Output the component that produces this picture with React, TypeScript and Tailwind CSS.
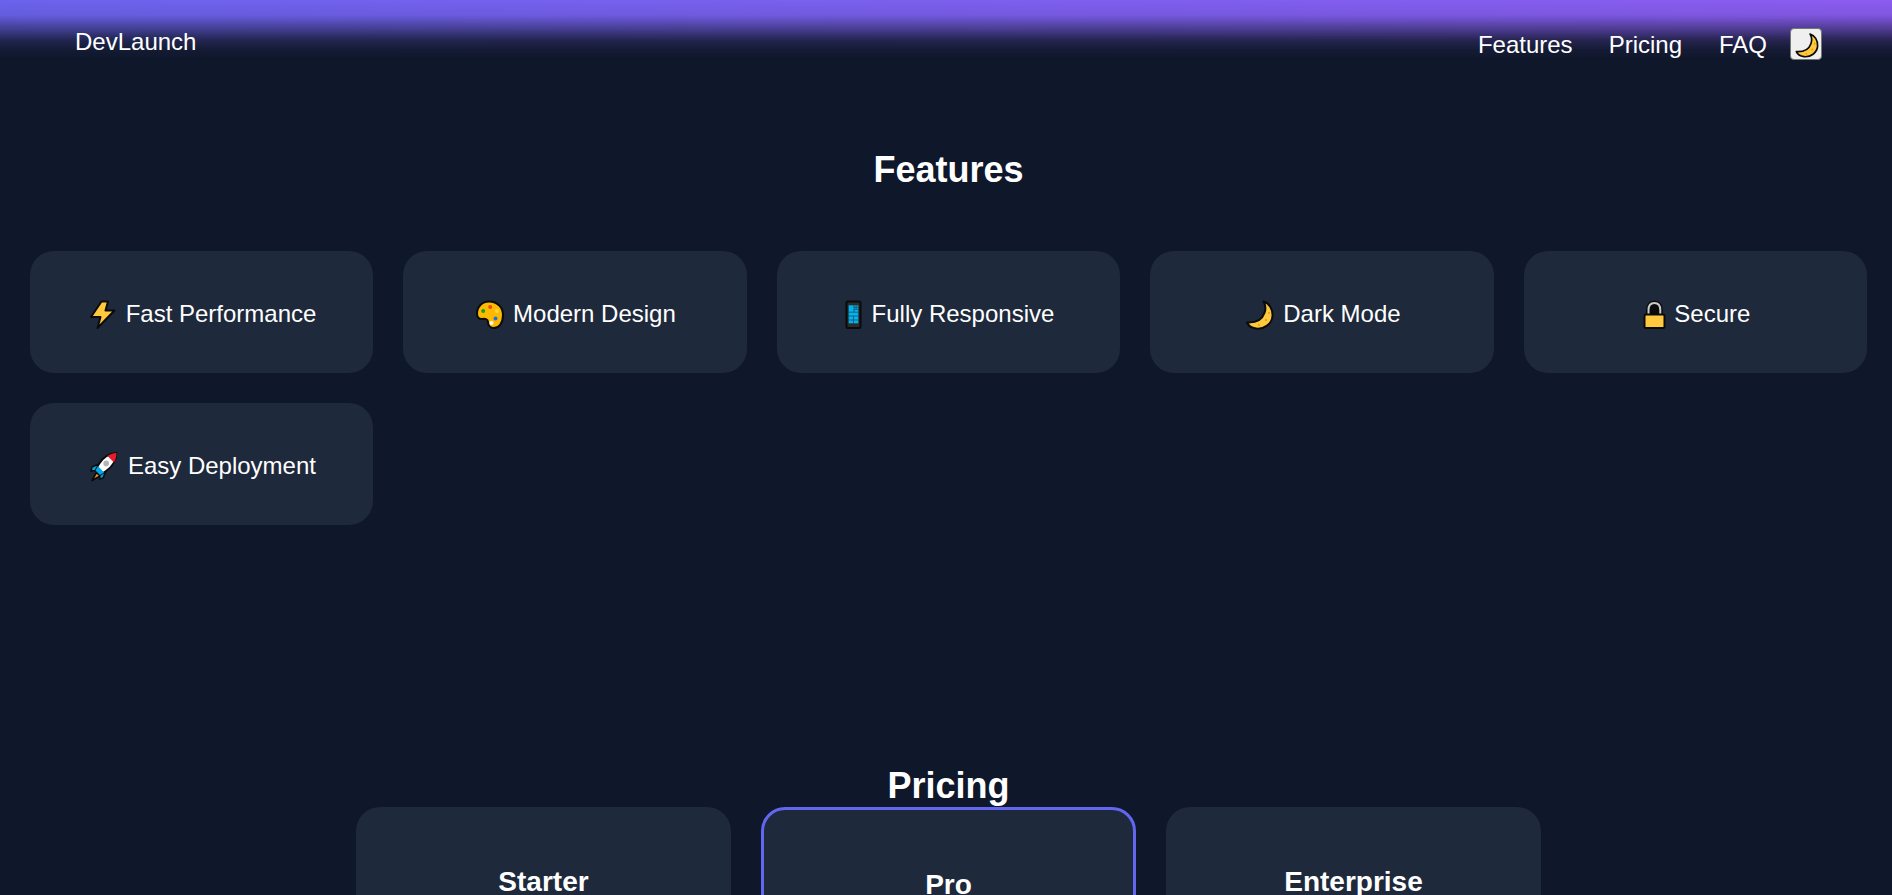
import type { ReactNode } from "react";

// Outlined emoji are drawn by hand: the sandbox only has the rounder Noto set
function Bolt() {
  return (
    <path
      d="M14.5 2.5 L21 2.5 L18.5 11.5 L27.5 11.5 L10.5 29 L13.5 18 L4 18 Z"
      fill="#ffc83d"
      stroke="#0b0b0b"
      strokeWidth="2"
      strokeLinejoin="round"
    />
  );
}

function Palette() {
  return (
    <>
      <path
        d="M15 2.5 C24 2.5 29 9 29 16 C29 24 25 29 20 29 C16 29 14 26 14 23 C14 20 11 19.5 8 20 C5 20.5 3 18 3 14.5 C3 8 8 2.5 15 2.5 Z"
        fill="#ffb900"
        stroke="#0b0b0b"
        strokeWidth="2"
      />
      <circle cx="9.2" cy="12" r="2" fill="#16a31a" />
      <circle cx="16.2" cy="8" r="2" fill="#e8491d" />
      <circle cx="23" cy="12" r="2" fill="#ffd83d" />
      <circle cx="21.5" cy="19.5" r="2" fill="#1d6fe8" />
      <circle cx="17.5" cy="24" r="2" fill="#ffffff" />
    </>
  );
}

function Phone() {
  return (
    <>
      <rect x="3.5" y="2.5" width="14" height="26.5" rx="1.5" fill="#2b2b2b" stroke="#0b0b0b" strokeWidth="2" />
      <rect x="5.7" y="6.3" width="9.6" height="18" fill="#00b4f0" />
      <path
        d="M11 6.3 V13 M13.2 6.3 V10 M11 8.2 H15.3 M11 10.4 H15.3 M5.7 13.2 H15.3 M5.7 17 H15.3 M5.7 21 H15.3 M10.5 17 V24.3"
        stroke="#1c4a63"
        strokeWidth="0.8"
        fill="none"
      />
    </>
  );
}

function Moon() {
  return (
    <>
      <path
        d="M20.5 2.5 C26 4 30 10 29.5 17 C29 25 21 30.5 13 29.5 C9 29 5.5 27 4 23.5 C12 24 19 21 21.5 14 C23 10 22.5 6 20.5 2.5 Z"
        fill="#ffc83d"
        stroke="#0b0b0b"
        strokeWidth="2"
        strokeLinejoin="round"
      />
      <circle cx="26" cy="14" r="1" fill="#e09a1c" />
      <circle cx="23" cy="21" r="1.1" fill="#e09a1c" />
      <circle cx="16" cy="26" r="0.9" fill="#e09a1c" />
    </>
  );
}

function Lock() {
  return (
    <>
      <path
        d="M8.5 16 V11 C8.5 6.5 10.8 4 14.4 4 C18 4 20.3 6.5 20.3 11 V16 Z"
        fill="#0b0b0b"
        stroke="#0b0b0b"
        strokeWidth="5"
      />
      <path d="M8.5 16 V11 C8.5 6.5 10.8 4 14.4 4 C18 4 20.3 6.5 20.3 11 V16" fill="none" stroke="#c9c9c9" strokeWidth="2" />
      <rect x="4.5" y="15.5" width="20" height="13.5" rx="1.5" fill="#ffc83d" stroke="#0b0b0b" strokeWidth="2" />
    </>
  );
}

function Rocket() {
  return (
    <>
      <path d="M9.5 21.5 L13 25 L5 29.5 Z" fill="#f7931e" stroke="#0b0b0b" strokeWidth="1.6" strokeLinejoin="round" />
      <path d="M12 13 L5 16 L4 20 L9.5 19.5 Z" fill="#00a8e8" stroke="#0b0b0b" strokeWidth="1.6" strokeLinejoin="round" />
      <path d="M19 20 L16 27 L12.5 28 L13 23 Z" fill="#00a8e8" stroke="#0b0b0b" strokeWidth="1.6" strokeLinejoin="round" />
      <path
        d="M29.5 2 C22 2.5 15.5 7 12 13 L8.5 19.5 L13 24 L19 20 C25 16 29 9 29.5 2 Z"
        fill="#ffffff"
        stroke="#0b0b0b"
        strokeWidth="1.8"
        strokeLinejoin="round"
      />
      <path d="M29.5 2 C26 2.2 23 3.2 20.5 5 L27 11.5 C28.6 8.6 29.4 5.4 29.5 2 Z" fill="#e81c2b" />
      <path d="M11 15 L17 21.5 L13 24 L8.5 19.5 Z" fill="#00a8e8" />
      <circle cx="19.2" cy="12.4" r="2.8" fill="#b4b4b4" />
    </>
  );
}

function Emoji({ width, children }: { width: number; children: ReactNode }) {
  return (
    <svg width={width} height="32" viewBox={`0 0 ${width} 32`} className="shrink-0 mt-[1px] mr-[6.67px]">
      {children}
    </svg>
  );
}

const features = [
  { icon: <Bolt />, width: 32, label: "Fast Performance" },
  { icon: <Palette />, width: 32, label: "Modern Design" },
  { icon: <Phone />, width: 22.3, label: "Fully Responsive" },
  { icon: <Moon />, width: 33.4, label: "Dark Mode" },
  { icon: <Lock />, width: 27.5, label: "Secure" },
  { icon: <Rocket />, width: 33.8, label: "Easy Deployment" },
];

const plans = ["Starter", "Pro", "Enterprise"];

export default function App() {
  return (
    <div className="relative h-[895px] overflow-hidden bg-[#0f172a] text-white font-['Liberation_Sans',Arial,sans-serif]">
      {/* Nav fades from the purple gradient into the page */}
      <div className="absolute inset-x-0 top-0 h-[80px] bg-gradient-to-r from-[#6c63ee] to-[#8b5cf0] [mask-image:linear-gradient(to_bottom,black_0,rgba(0,0,0,0.92)_15px,rgba(0,0,0,0.5)_30px,rgba(0,0,0,0.2)_40px,rgba(0,0,0,0.05)_50px,transparent_60px)]" />
      <nav className="relative flex items-start justify-between pl-[75px] pr-[70px] h-[60px] pt-[28px]">
        <span className="text-2xl leading-[28px]">DevLaunch</span>
        <div className="flex items-start">
          <a className="text-2xl leading-[32px] mt-[1px] mr-[36px]">Features</a>
          <a className="text-2xl leading-[32px] mt-[1px] mr-[37px]">Pricing</a>
          <a className="text-2xl leading-[32px] mt-[1px] mr-[23px]">FAQ</a>
          <button className="w-8 h-8 flex items-center justify-center pt-[3px] bg-[#efefef] border border-[#767676] rounded-[4px]">
            <svg width="26.7" height="26.7" viewBox="0 0 32 32" className="shrink-0">
              <Moon />
            </svg>
          </button>
        </div>
      </nav>

      <section className="w-[1897px] px-[30px] pt-[88px]">
        <h2 className="text-[36px] leading-[44px] font-bold text-center mb-[59px]">Features</h2>
        <div className="grid grid-cols-5 gap-[30px]">
          {features.map((f) => (
            <div
              key={f.label}
              className="h-[122px] flex items-center justify-center pt-[4px] bg-[#1e293b] rounded-[24px] text-2xl"
            >
              <Emoji width={f.width}>{f.icon}</Emoji>
              <span>{f.label}</span>
            </div>
          ))}
        </div>
      </section>

      <section className="w-[1897px] mt-[239px]">
        <h2 className="text-[36px] leading-[44px] font-bold text-center">Pricing</h2>
        <div className="flex justify-center gap-[30px] -mt-[1px]">
          {plans.map((p) => (
            <div
              key={p}
              className={`w-[375px] h-[300px] bg-[#1e293b] rounded-[24px] text-center pt-[58px] ${p === "Pro" ? "border-[3px] border-[#6366f1]" : ""}`}
            >
              <h3 className="text-[28px] leading-[34px] font-bold">{p}</h3>
            </div>
          ))}
        </div>
      </section>
    </div>
  );
}
